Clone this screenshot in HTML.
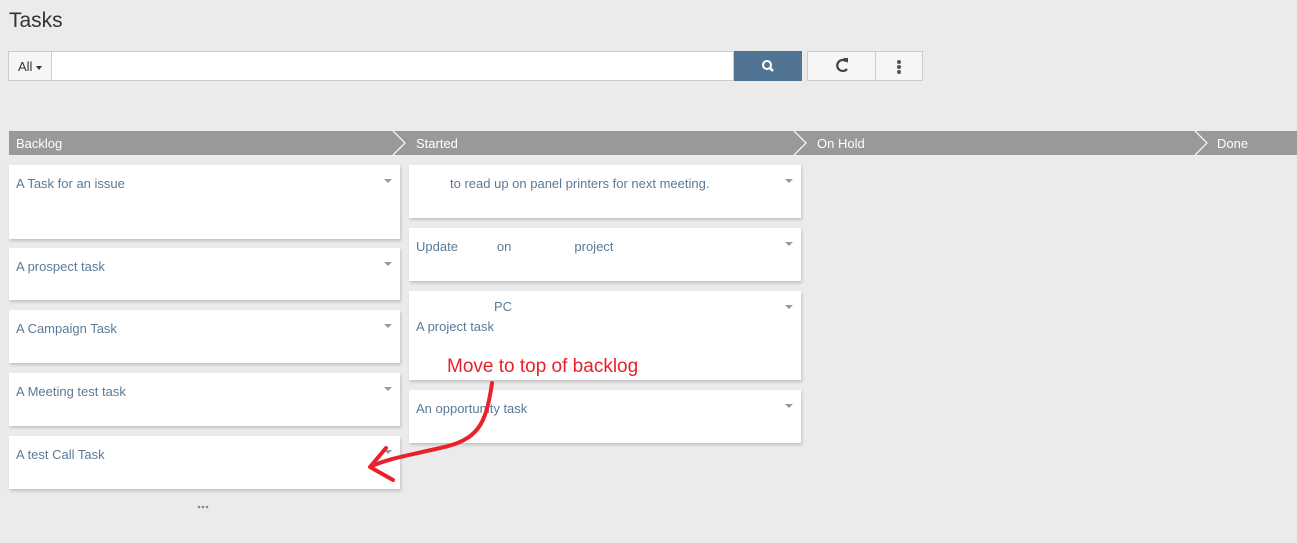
<!DOCTYPE html>
<html><head><meta charset="utf-8"><style>
*{box-sizing:border-box;margin:0;padding:0}
body{width:1297px;height:543px;background:#ebebeb;font-family:"Liberation Sans",sans-serif;position:relative;overflow:hidden}
.abs{position:absolute}
h1{position:absolute;left:9px;top:9px;font-size:21px;font-weight:normal;color:#333}
.search{left:8px;top:51px;width:726px;height:30px;background:#fff;border:1px solid #ccc}
.all{left:8px;top:51px;width:44px;height:30px;background:#f6f6f6;border:1px solid #ccc;font-size:13px;color:#333;padding:7px 0 0 9px}
.sbtn{left:734px;top:51px;width:68px;height:30px;background:#527494}
.b2{left:807px;top:51px;width:116px;height:30px;background:#f6f6f6;border:1px solid #ccc}
.hdr{left:9px;top:131px;width:1288px;height:24px;background:#999}
.hl{position:absolute;top:5px;color:#fff;font-size:13px}
.card{position:absolute;background:#fff;box-shadow:1px 2px 3px rgba(0,0,0,.18);font-size:13px;color:#5b7a96;padding:11px 7px}
.card .c{position:absolute;right:8px;top:14px;width:0;height:0;border-left:4px solid transparent;border-right:4px solid transparent;border-top:4px solid #999}
</style></head><body>
<h1>Tasks</h1>
<div class="abs search"></div>
<div class="abs all">All <span style="display:inline-block;border-left:3.5px solid transparent;border-right:3.5px solid transparent;border-top:4px solid #333;vertical-align:middle"></span></div>
<div class="abs sbtn"><svg width="68" height="30"><circle cx="33" cy="14" r="4" stroke="#fff" stroke-width="2" fill="none"/><line x1="36" y1="17" x2="39" y2="20" stroke="#fff" stroke-width="2.5"/></svg></div>
<div class="abs b2"><div class="abs" style="left:67px;top:0;width:1px;height:28px;background:#ccc"></div>
<svg class="abs" style="left:0;top:0" width="67" height="28"><path d="M38.5 9.5 A5.5 5.5 0 1 0 39 17" stroke="#444" stroke-width="2.2" fill="none"/><path d="M35 6 L40 6 L40 11 Z" fill="#444"/></svg>
<div class="abs" style="left:89px;top:8px;width:4px;height:4px;border-radius:2px;background:#555;box-shadow:0 5px 0 #555,0 10px 0 #555"></div></div>
<div class="abs hdr">
<span class="hl" style="left:7px">Backlog</span><span class="hl" style="left:407px">Started</span><span class="hl" style="left:808px">On Hold</span><span class="hl" style="left:1208px">Done</span>
<svg class="abs" style="left:0;top:0" width="1288" height="24"><g stroke="#fff" stroke-width="1.2" fill="none"><path d="M384 0 L396 12 L384 24"/><path d="M785 0 L797 12 L785 24"/><path d="M1186 0 L1198 12 L1186 24"/></g></svg>
</div>
<div class="card" style="left:9px;top:165px;width:391px;height:74px">A Task for an issue<i class="c"></i></div>
<div class="card" style="left:9px;top:248px;width:391px;height:52px">A prospect task<i class="c"></i></div>
<div class="card" style="left:9px;top:310px;width:391px;height:53px">A Campaign Task<i class="c"></i></div>
<div class="card" style="left:9px;top:373px;width:391px;height:53px">A Meeting test task<i class="c"></i></div>
<div class="card" style="left:9px;top:436px;width:391px;height:53px">A test Call Task<i class="c"></i></div>
<svg class="abs" style="left:197px;top:504px" width="16" height="6"><circle cx="2" cy="3" r="1.3" fill="#888"/><circle cx="6" cy="3" r="1.3" fill="#888"/><circle cx="10" cy="3" r="1.3" fill="#888"/></svg>
<div class="card" style="left:409px;top:165px;width:392px;height:53px"><span style="margin-left:34px">to read up on panel printers for next meeting.</span><i class="c"></i></div>
<div class="card" style="left:409px;top:228px;width:392px;height:53px">Update<span style="margin-left:39px">on</span><span style="margin-left:63px">project</span><i class="c"></i></div>
<div class="card" style="left:409px;top:291px;width:392px;height:89px;padding-top:6px;line-height:20px"><span style="margin-left:78px">PC</span><br>A project task<i class="c"></i></div>
<div class="card" style="left:409px;top:390px;width:392px;height:53px">An opportunity task<i class="c"></i></div>
<div class="abs" style="left:447px;top:356px;font-size:19px;color:#e8222a">Move to top of backlog</div>
<svg class="abs" style="left:0;top:0" width="1297" height="543"><g stroke="#e8222a" stroke-width="4" fill="none" stroke-linecap="round" stroke-linejoin="round"><path d="M492 383 C486 425 478 440 440 448 C410 455 390 458 372 466"/><path d="M386 448 L370 467 L393 480"/></g></svg>
</body></html>
